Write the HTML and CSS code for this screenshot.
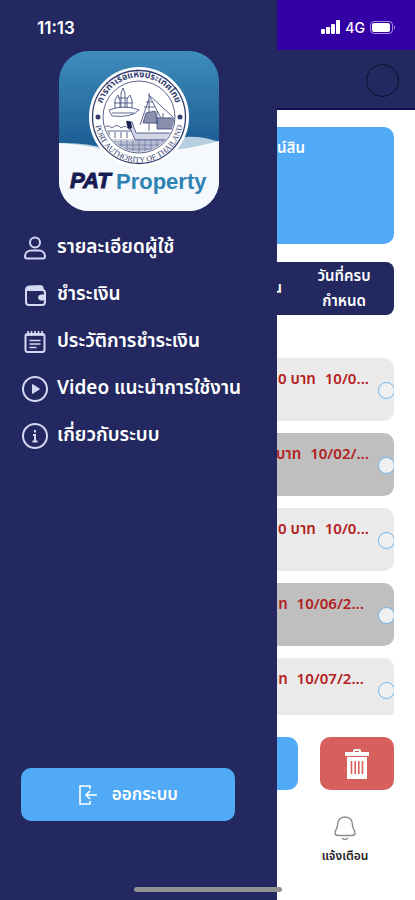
FILE: index.html
```html
<!DOCTYPE html>
<html lang="th">
<head>
  <meta charset="UTF-8">
  <meta name="viewport" content="width=device-width, initial-scale=1.0">
  <title>PAT Property</title>
  <link rel="stylesheet" href="styles.css">
</head>
<body>
  <div class="page">
    <div class="status-bar">
      <svg class="signal" viewBox="0 0 19 14" aria-hidden="true">
        <rect x="0" y="9" width="4" height="5" rx="1"/>
        <rect x="5" y="7" width="4" height="7" rx="1"/>
        <rect x="10" y="4" width="4" height="10" rx="1"/>
        <rect x="15" y="0" width="4" height="14" rx="1"/>
      </svg>
      <span>4G</span>
      <svg class="battery" viewBox="0 0 26 13" aria-hidden="true">
        <rect x="0.5" y="0.5" width="22" height="12" rx="3.5" fill="none" stroke="#a48be0"/>
        <rect x="2" y="2" width="18" height="9" rx="2" fill="#fff"/>
        <path d="M24 4.5v4c1.500-.6 1.500-3.400 0-4z" fill="#a48be0"/>
      </svg>
    </div>

    <header class="top-bar">
      <button class="profile" type="button" aria-label="โปรไฟล์"></button>
    </header>

    <main class="content">
      <section class="summary-card">
        <h2>น์สิน</h2>
      </section>

      <div class="list-head">
        <span class="col-amount">น</span>
        <span class="col-date">วันที่ครบกำหนด</span>
      </div>

      <div class="bill-list">
        <label class="bill">
          <span>0 บาท</span><span>10/0...</span>
          <input type="radio" name="bill">
        </label>
        <label class="bill dark">
          <span>บาท</span><span>10/02/...</span>
          <input type="radio" name="bill">
        </label>
        <label class="bill">
          <span>0 บาท</span><span>10/0...</span>
          <input type="radio" name="bill">
        </label>
        <label class="bill dark long">
          <span>บาท</span><span>10/06/2...</span>
          <input type="radio" name="bill">
        </label>
        <label class="bill long">
          <span>บาท</span><span>10/07/2...</span>
          <input type="radio" name="bill">
        </label>
      </div>

      <div class="actions">
        <button class="btn pay" type="button" aria-label="ชำระเงิน"></button>
        <button class="btn delete" type="button" aria-label="ลบ">
          <svg viewBox="0 0 24 30" width="24" height="30" aria-hidden="true">
            <path d="M8 3V2q0-2 2-2h4q2 0 2 2v1h8v4H0V3zM10 3h4V2h-4z" fill="#fff" fill-rule="evenodd"/>
            <path d="M2 8h20v22H2z" fill="#fff"/>
            <path d="M6.500 12v13M10.200 12v13M13.800 12v13M17.500 12v13" stroke="#d75f5c" stroke-width="1.600"/>
          </svg>
        </button>
      </div>
    </main>

    <nav class="bottom-nav">
      <a href="#notifications">
        <svg viewBox="0 0 22 25" width="22" height="25" fill="none" stroke="#8b8b8b" stroke-width="1.400" aria-hidden="true">
          <path d="M11 1C6 1 3.500 4.500 3.500 9c0 4-2.500 5-2.500 8q0 2.500 3 2.500h14q3 0 3-2.500c0-3-2.500-4-2.500-8C18.500 4.500 16 1 11 1z"/>
          <path d="M8 22q3 3 6 0"/>
        </svg>
        <span>แจ้งเตือน</span>
      </a>
    </nav>
  </div>

  <aside class="drawer">
    <time class="clock">11:13</time>

    <svg class="logo" viewBox="0 0 160 160" role="img" aria-label="PAT Property">
      <defs>
        <linearGradient id="sky" x1="0" y1="0" x2="0" y2="1">
          <stop offset="0" stop-color="#3f8dbc"/>
          <stop offset="0.55" stop-color="#1f6097"/>
        </linearGradient>
        <clipPath id="tile"><rect width="160" height="160" rx="30"/></clipPath>
        <clipPath id="inner"><circle cx="80" cy="66" r="35"/></clipPath>
        <path id="arc-top" d="M42 74a39 39 0 1 1 76 0"/>
        <path id="arc-bottom" d="M37 58a44 44 0 1 0 86 0"/>
      </defs>
      <g clip-path="url(#tile)">
        <rect width="160" height="160" fill="url(#sky)"/>
        <path d="M0 92q25-1 50 6 50 0 76-12 18-1 34 5v69H0z" fill="#b5cfe1"/>
        <path d="M0 92q35 2 65 12 60-4 95-14v70H0z" fill="#f5f8fc"/>
      </g>
      <circle cx="80" cy="66" r="50" fill="#fff"/>
      <g fill="none" stroke="#343d70">
        <circle cx="80" cy="66" r="46.500" stroke-width="1.300"/>
        <circle cx="80" cy="66" r="36" stroke-width="0.800"/>
      </g>
      <g class="seal-text">
        <text><textPath href="#arc-top" startOffset="50%">การท่าเรือแห่งประเทศไทย</textPath></text>
        <text class="latin"><textPath href="#arc-bottom" startOffset="50%">PORT AUTHORITY OF THAILAND</textPath></text>
      </g>
      <g fill="#343d70">
        <circle cx="39" cy="66" r="2.500"/>
        <circle cx="121" cy="66" r="2.500"/>
      </g>
      <g clip-path="url(#inner)" fill="none" stroke="#4b5685" stroke-width="0.900">
        <path d="M50 59q15-6 30 0-7 8-27 6zM53 62h22M56 58V49l3-5 2 5v8M62 57V42l2-5 2 5v15M68 57V48l3-4 2 5v8M55 52h19M59 47h10"/>
        <path d="M90 42v38M87 51h7M85 56h11M90 44l24 22M90 44l15 29M90 48l-9 26M98 72V60M104 74V62M110 76V66M93 66l24 4M88 71l29 3"/>
        <path d="M87 62l9-2 3 12H84zM98 67h17v11H98z" fill="#8990ae"/>
        <path d="M68 70l5 1 4 11h39v7H76z" fill="#d3d7e5"/>
        <path d="M67 70l5 1 1 6-4 1z" fill="#18204d" stroke="none"/>
        <path d="M43 79q5-7 10-2 5-5 9 0 5-4 9 2M46 80h26M50 81v6M56 81v6M62 81v6M68 81v6"/>
        <rect x="42" y="90" width="78" height="14" fill="#b6bed3" stroke="none"/>
        <path d="M42 89h78M42 94h78M42 98h78M50 89v15M56 89v15M62 89v15M68 89v15M74 89v15M80 89v15M86 89v15M92 89v15M98 89v15M104 89v15M110 89v15" stroke-width="0.500"/>
      </g>
      <text class="brand-pat" x="11" y="137">PAT</text>
      <text class="brand-name" x="57" y="138">Property</text>
    </svg>

    <nav class="menu">
      <a href="#user">
        <svg viewBox="0 0 28 28" aria-hidden="true">
          <circle cx="14" cy="8.500" r="5"/>
          <path d="M6 24.500q-2 0-2-2c0-4 3-6 6-6h8c3 0 6 2 6 6q0 2-2 2z"/>
        </svg>
        รายละเอียดผู้ใช้
      </a>
      <a href="#payment">
        <svg viewBox="0 0 28 28" aria-hidden="true">
          <path d="M5 9v12q0 3 3 3h13q3 0 3-3V12q0-3-3-3z"/>
          <path d="M5 9q0-3 3-3.500L18 5q4-.5 4 4z" fill="currentColor"/>
          <path d="M24 14h-4q-2.500 0-2.500 2.500T20 19h4z" fill="currentColor" stroke-width="1"/>
        </svg>
        ชำระเงิน
      </a>
      <a href="#history">
        <svg viewBox="0 0 28 28" aria-hidden="true">
          <rect x="4.500" y="6" width="19" height="18" rx="2"/>
          <path d="M5 7h18M7 3v5M10.500 3v5M14 3v5M17.500 3v5M21 3v5M8.500 12.500h11M8.500 16h11M8.500 19.500h7" stroke-width="1.700"/>
        </svg>
        ประวัติการชำระเงิน
      </a>
      <a href="#video">
        <svg viewBox="0 0 28 28" aria-hidden="true">
          <circle cx="14" cy="14" r="12"/>
          <path d="M11.500 9.500l7 4.500-7 4.500z" fill="currentColor" stroke-width="1"/>
        </svg>
        Video แนะนำการใช้งาน
      </a>
      <a href="#about">
        <svg viewBox="0 0 28 28" aria-hidden="true">
          <circle cx="14" cy="14" r="12"/>
          <path d="M14 8v2.500M12 13h2v6.500M11.500 19.500h5"/>
        </svg>
        เกี่ยวกับระบบ
      </a>
    </nav>

    <button class="btn logout" type="button">
      <svg viewBox="0 0 20 20" width="20" height="20" fill="none" stroke="#fff" stroke-width="1.600" aria-hidden="true">
        <path d="M12 4V1H2v18h10v-3M19 10H8M12 6l-4 4 4 4"/>
      </svg>
      ออกระบบ
    </button>
  </aside>

  <div class="home-indicator"></div>
</body>
</html>
```

FILE: styles.css
```css
* {
  box-sizing: border-box;
}

body {
  margin: 0;
  background-color: #fff;
  font-family: "Noto Sans Thai", "Noto Sans", sans-serif;
}

button {
  border: none;
  font-family: inherit;
  cursor: pointer;
}

a {
  color: inherit;
  text-decoration: none;
}

.page {
  display: flex;
  flex-direction: column;
  height: 100vh;
}

.status-bar {
  display: flex;
  align-items: center;
  justify-content: flex-end;
  gap: 5px;
  height: 50px;
  padding: 4px 19px 0 0;
  background-color: #3300a6;
  color: #fff;
  font-family: Inter, sans-serif;
  font-size: 14px;
  font-weight: 500;
}

.signal {
  width: 19px;
  height: 14px;
  fill: #fff;
}

.battery {
  width: 26px;
  height: 13px;
}

.top-bar {
  display: flex;
  align-items: center;
  justify-content: flex-end;
  height: 60px;
  padding: 2px 16px 0;
  background-color: #232860;
  border-bottom: 2px solid #100c50;
}

.profile {
  width: 33px;
  height: 33px;
  border: 1px solid #0c0e2c;
  border-radius: 50%;
  background: none;
}

.content {
  display: flex;
  flex: 1;
  flex-direction: column;
  min-height: 0;
  padding: 17px 21px 0;
}

.summary-card {
  flex: none;
  height: 117px;
  padding: 10px 89px 0 20px;
  border-radius: 10px;
  background-color: #50aaf5;
  color: #fff;
  text-align: right;
}

.summary-card h2 {
  margin: 0;
  font-size: 15px;
  font-weight: 600;
  line-height: 24px;
}

.list-head {
  display: flex;
  flex: none;
  align-items: center;
  justify-content: flex-end;
  gap: 24px;
  height: 53px;
  margin: 18px 0 43px;
  padding-right: 12px;
  border-radius: 8px;
  background-color: #232860;
  color: #fff;
  font-size: 15px;
  font-weight: 600;
  line-height: 25px;
}

.col-date {
  width: 76px;
  text-align: center;
}

.bill-list {
  display: flex;
  flex: 1;
  flex-direction: column;
  gap: 12px;
  min-height: 0;
  overflow: hidden;
}

.bill {
  display: flex;
  flex: none;
  justify-content: flex-end;
  gap: 9px;
  height: 63px;
  padding-top: 10px;
  border-radius: 10px;
  background-color: #eaeaea;
  color: #b32020;
  font-size: 15px;
  font-weight: 600;
  line-height: 24px;
  white-space: nowrap;
  overflow: hidden;
}

.bill.dark {
  background-color: #bfbfbf;
}

.bill input {
  appearance: none;
  width: 17px;
  height: 17px;
  margin: 14px -1px 0 0;
  border: 1px solid #6bb3ea;
  border-radius: 50%;
  background-color: #f0f0f0;
}

.bill.long input {
  margin-left: 5px;
}

.actions {
  display: flex;
  flex: none;
  gap: 22px;
  margin-top: 22px;
}

.btn {
  display: flex;
  align-items: center;
  justify-content: center;
  height: 53px;
  border-radius: 10px;
  background-color: #50aaf5;
  color: #fff;
}

.pay {
  flex: 1;
}

.delete {
  width: 74px;
  background-color: #d75f5c;
}

.bottom-nav {
  display: flex;
  justify-content: flex-end;
  height: 110px;
  padding: 26px 35px 0;
}

.bottom-nav a {
  display: flex;
  flex-direction: column;
  align-items: center;
  gap: 3px;
  width: 70px;
  color: #222;
  font-size: 12px;
  font-weight: 600;
  line-height: 24px;
  white-space: nowrap;
}

/* side menu lies over the page */
.drawer {
  position: fixed;
  top: 0;
  bottom: 0;
  left: 0;
  display: flex;
  flex-direction: column;
  width: calc(200% / 3);
  padding: 16px 42px 79px 21px;
  background-color: #232860;
  color: #fff;
}

.clock {
  padding-left: 16px;
  font-family: Inter, sans-serif;
  font-size: 17px;
  font-weight: 600;
  line-height: 24px;
}

.logo {
  width: 160px;
  height: 160px;
  margin: 11px 0 0 38px;
}

.seal-text {
  fill: #343d70;
  font-family: "Noto Sans Thai", "Noto Sans", sans-serif;
  font-size: 9px;
  font-weight: 700;
  text-anchor: middle;
}

.seal-text .latin {
  font-family: "Liberation Serif", serif;
  font-size: 8px;
  font-weight: 400;
}

.brand-pat,
.brand-name {
  font-family: "Liberation Sans", sans-serif;
  font-size: 22px;
  font-weight: 700;
}

.brand-pat {
  fill: #171c52;
  stroke: #171c52;
  font-style: italic;
}

.brand-name {
  fill: #2d83b3;
}

.menu {
  display: flex;
  flex-direction: column;
  gap: 19px;
  margin-top: 23px;
}

.menu a {
  display: flex;
  align-items: center;
  gap: 8px;
  font-size: 19px;
  font-weight: 600;
  line-height: 28px;
  white-space: nowrap;
}

.menu svg {
  flex: none;
  width: 28px;
  height: 28px;
  color: #d3d8f3;
  fill: none;
  stroke: currentColor;
  stroke-width: 2;
}

.logout {
  gap: 14px;
  margin-top: auto;
  font-size: 17px;
  font-weight: 600;
}

.home-indicator {
  position: fixed;
  bottom: 8px;
  left: 50%;
  width: 148px;
  height: 5px;
  border-radius: 3px;
  background-color: #929292;
  transform: translateX(-50%);
}
```
